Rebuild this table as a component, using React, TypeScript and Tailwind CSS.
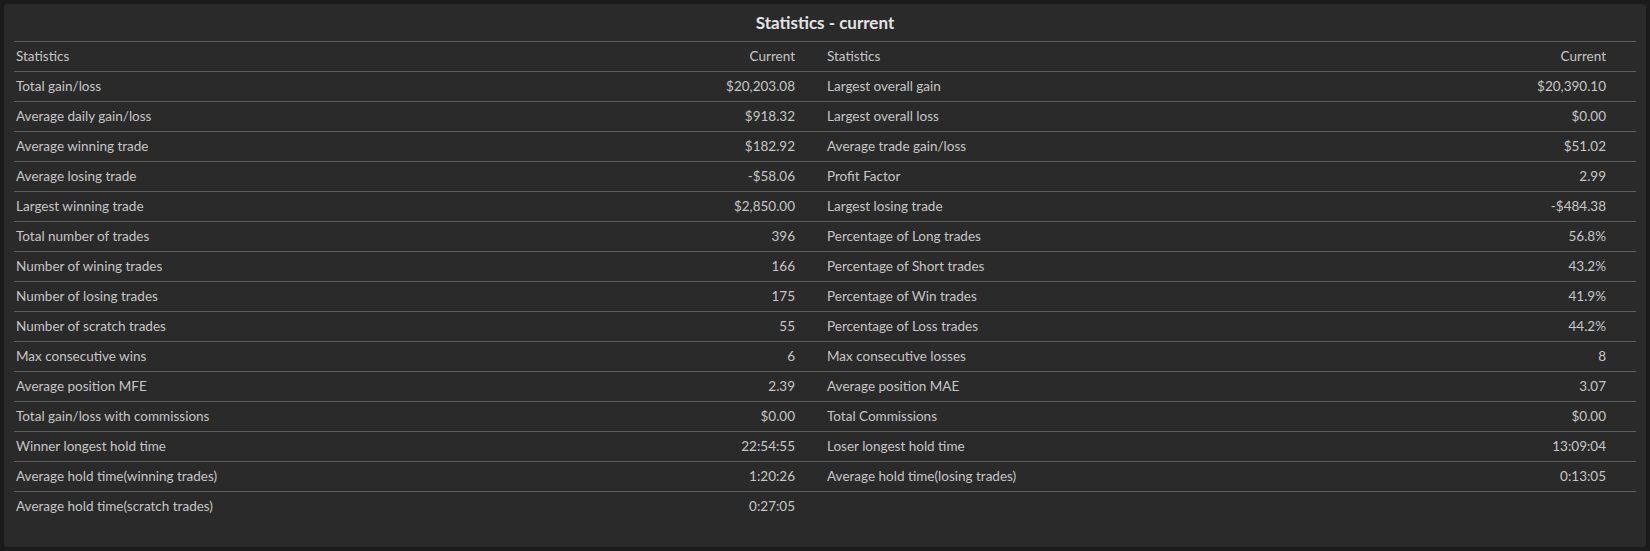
const left: [string, string][] = [
  ["Total gain/loss", "$20,203.08"],
  ["Average daily gain/loss", "$918.32"],
  ["Average winning trade", "$182.92"],
  ["Average losing trade", "-$58.06"],
  ["Largest winning trade", "$2,850.00"],
  ["Total number of trades", "396"],
  ["Number of wining trades", "166"],
  ["Number of losing trades", "175"],
  ["Number of scratch trades", "55"],
  ["Max consecutive wins", "6"],
  ["Average position MFE", "2.39"],
  ["Total gain/loss with commissions", "$0.00"],
  ["Winner longest hold time", "22:54:55"],
  ["Average hold time(winning trades)", "1:20:26"],
  ["Average hold time(scratch trades)", "0:27:05"],
];

const right: [string, string][] = [
  ["Largest overall gain", "$20,390.10"],
  ["Largest overall loss", "$0.00"],
  ["Average trade gain/loss", "$51.02"],
  ["Profit Factor", "2.99"],
  ["Largest losing trade", "-$484.38"],
  ["Percentage of Long trades", "56.8%"],
  ["Percentage of Short trades", "43.2%"],
  ["Percentage of Win trades", "41.9%"],
  ["Percentage of Loss trades", "44.2%"],
  ["Max consecutive losses", "8"],
  ["Average position MAE", "3.07"],
  ["Total Commissions", "$0.00"],
  ["Loser longest hold time", "13:09:04"],
  ["Average hold time(losing trades)", "0:13:05"],
];

const Half = ({ label, value }: { label?: string; value?: string }) => (
  <div className="flex items-center justify-between pl-[2px] pr-[30px]">
    <span>{label}</span>
    <span>{value}</span>
  </div>
);

export default function App() {
  const head: [string, string] = ["Statistics", "Current"];
  const rows = [head, ...left].map((l, i) => ({ l, r: i === 0 ? head : right[i - 1] }));

  return (
    <div className="min-h-[551px] bg-[#1b1b1b] p-1 font-['Lato','Liberation_Sans',sans-serif]">
      <div className="rounded-[3px] bg-[#2a2a2a] px-[10px] pb-[26px]">
        <div className="flex h-[37px] items-center justify-center pt-px text-[17px] font-bold text-[#e4e4e4]">
          Statistics - current
        </div>
        <div className="text-[13.5px] text-[#c6c6c6]">
          {rows.map(({ l, r }, i) => (
            <div key={i} className="grid h-[30px] grid-cols-2 border-t border-[#5e5e5e]">
              <Half label={l[0]} value={l[1]} />
              <Half label={r?.[0]} value={r?.[1]} />
            </div>
          ))}
        </div>
      </div>
    </div>
  );
}
